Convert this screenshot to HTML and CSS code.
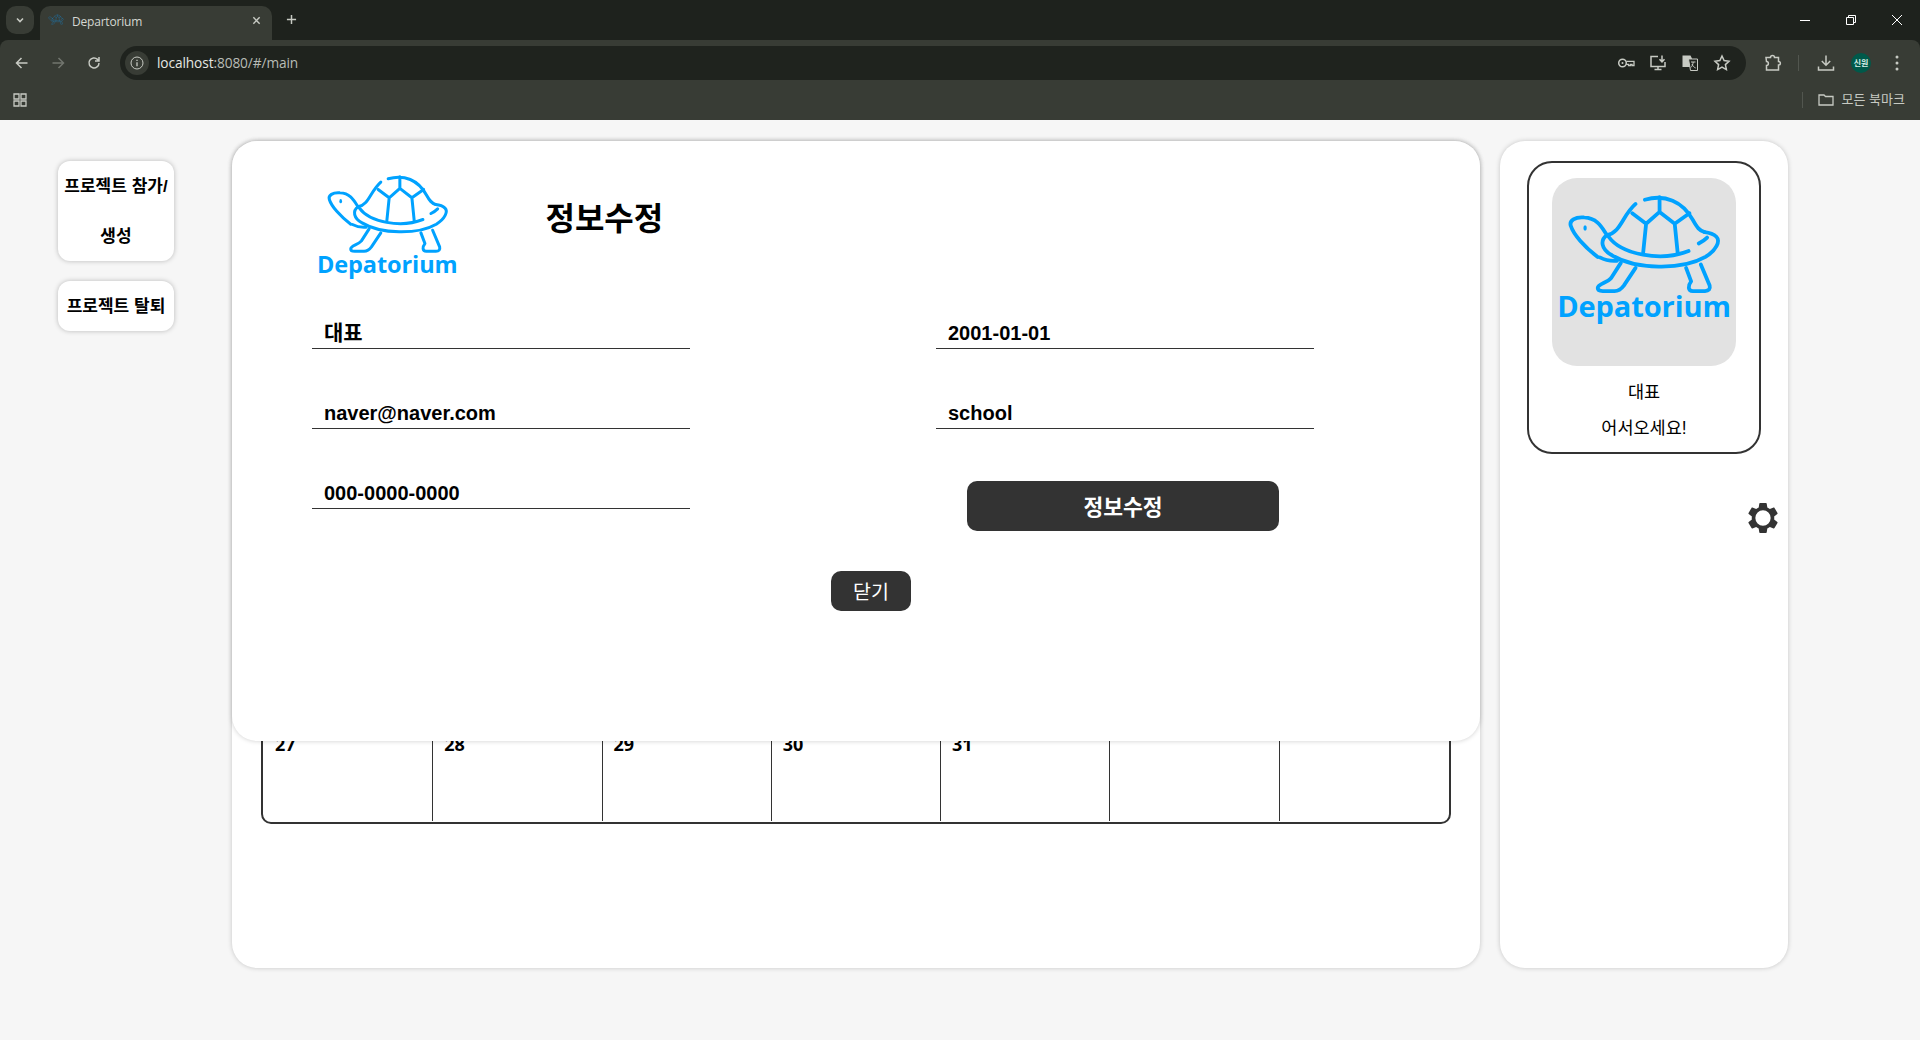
FILE: index.html
```html
<!DOCTYPE html>
<html lang="ko">
<head>
<meta charset="utf-8">
<title>Departorium</title>
<link rel="stylesheet" href="styles.css">
</head>
<body>
<svg class="defs" aria-hidden="true">
  <symbol id="turtle" viewBox="70 30 380 240">
    <g fill="none" stroke="currentColor" stroke-width="9" stroke-linecap="round" stroke-linejoin="round">
      <path d="M172 130C160 112 150 90 118 88C96 86 82 96 86 108C92 128 118 158 150 182"/>
      <path d="M172 130C205 124 208 84 240 56"/>
      <path d="M262 46C310 32 352 50 376 94C386 112 392 120 404 123"/>
      <path d="M172 130C155 142 158 164 184 178C240 212 350 214 406 182C432 166 442 144 432 134C424 126 414 124 404 123"/>
      <path d="M176 134C206 176 300 194 366 168"/>
      <path d="M390 150C398 146 404 142 410 136"/>
      <path d="M297 40V75L265 103L232 78M297 75L333 103L368 78M265 103L258 172M333 103L340 172"/>
      <path d="M155 183C168 190 182 192 196 191"/>
      <path d="M205 196L182 232C172 244 150 246 150 256C150 262 156 263 162 263H190C200 263 206 258 212 250L240 208"/>
      <path d="M360 208L372 240C364 250 364 263 376 263H405C414 263 418 258 416 250L395 200"/>
    </g>
    <ellipse cx="120" cy="113" rx="4" ry="6.500" fill="currentColor"/>
  </symbol>
</svg>

<header class="chrome">
  <div class="tabstrip">
    <div class="tab-menu">
      <svg class="ico10" viewBox="0 0 10 10"><path d="M2 3.500L5 6.500L8 3.500" class="s-light sw16"/></svg>
    </div>
    <div class="tab">
      <svg class="favicon"><use href="#turtle"/></svg>
      <span class="tab-title">Departorium</span>
      <svg class="tab-close" viewBox="0 0 10 10"><path d="M1.500 1.500L8.500 8.500M8.500 1.500L1.500 8.500" class="s-light sw16"/></svg>
    </div>
    <svg class="tab-new" viewBox="0 0 12 12"><path d="M6 1V11M1 6H11" class="s-light sw16"/></svg>
    <div class="win-controls">
      <svg class="win-btn" viewBox="0 0 10 10"><path d="M0 5.500H10" class="s-white"/></svg>
      <svg class="win-btn" viewBox="0 0 10 10"><path d="M.5 2.500H7.500V9.500H.5ZM2.500 2.500V.5H9.500V7.500H7.500" class="s-white"/></svg>
      <svg class="win-btn" viewBox="0 0 10 10"><path d="M0 0L10 10M10 0L0 10" class="s-white"/></svg>
    </div>
  </div>
  <div class="toolbar">
    <div class="navrow">
      <svg class="nav-ico" viewBox="0 0 16 16"><path d="M13.500 8H3M7.500 3L2.500 8L7.500 13" class="s-light sw15"/></svg>
      <svg class="nav-ico" viewBox="0 0 16 16"><path d="M2.500 8H13M8.500 3L13.500 8L8.500 13" class="s-dim sw15"/></svg>
      <svg class="nav-ico" viewBox="0 0 16 16"><path d="M13 8A5 5 0 1 1 11.500 4.400L13 6M13 2V6H9" class="s-light sw15"/></svg>
      <div class="omnibox">
        <div class="info-chip">
          <svg class="ico14" viewBox="0 0 14 14"><circle cx="7" cy="7" r="6" class="s-light"/><path d="M7 6.200V10.200M7 3.800V5" class="s-light sw13"/></svg>
        </div>
        <span class="url"><span class="url-host">localhost</span>:8080/#/main</span>
        <div class="omni-icons">
          <svg class="omni-ico" viewBox="0 0 18 18"><circle cx="5.500" cy="9" r="3.800" class="s-light sw15"/><circle cx="5.500" cy="9" r="1" class="f-light"/><path d="M9.300 7.400H17V11.500H15V10.400H13.500V11.500H11.500V10.400H9.300" class="s-light sw13"/></svg>
          <svg class="omni-ico" viewBox="0 0 18 18"><path d="M9 2.500H2V12.500H16V8M5.500 15.500H12.500M9 12.500V15.500" class="s-light sw15"/><path d="M13 1.500V7.500M10.500 5.200L13 7.800L15.500 5.200" class="s-light sw15"/></svg>
          <svg class="omni-ico" viewBox="0 0 18 18"><path d="M1.500 1.500H9.500L11 4.500V13H1.500Z" class="f-light"/><path d="M7.500 5H16.500V16.500H9.500Z" class="s-light f-dark"/><path d="M10 8H14.500M12.200 8C12 10.500 11 12.500 9.800 13.500M11 10C11.700 12 13 13.300 14.700 14" class="s-light"/></svg>
          <svg class="omni-ico" viewBox="0 0 18 18"><path d="M9 2L11.100 6.600L16 7.200L12.400 10.600L13.400 15.600L9 13.100L4.600 15.600L5.600 10.600L2 7.200L6.900 6.600Z" class="s-light sw15"/></svg>
        </div>
      </div>
      <svg class="ext-ico" viewBox="0 0 18 18"><path d="M2 3.500H6.500C6.500 .8 10.500 .8 10.500 3.500H14.500V7.500C17 7.500 17 11 14.500 11V16H2.500V11.500C5 11.500 5 7.500 2.500 7.500Z" class="s-light sw15"/></svg>
      <span class="sep"></span>
      <svg class="dl-ico" viewBox="0 0 18 18"><path d="M9 1.500V11M4.800 7L9 11.200L13.200 7M1.500 12.500V16H16.500V12.500" class="s-light sw15"/></svg>
      <span class="avatar">신원</span>
      <svg class="more-ico" viewBox="0 0 4 16"><circle cx="2" cy="2" r="1.500" class="f-light"/><circle cx="2" cy="8" r="1.500" class="f-light"/><circle cx="2" cy="14" r="1.500" class="f-light"/></svg>
    </div>
    <div class="bookmarks">
      <svg class="apps-ico" viewBox="0 0 14 14"><path d="M1 1H6V6H1ZM8 1H13V6H8ZM1 8H6V13H1ZM8 8H13V13H8Z" class="s-light sw13"/></svg>
      <span class="sep sep-bm"></span>
      <svg class="folder-ico" viewBox="0 0 16 12"><path d="M1 1H6L7.500 2.500H15V11H1Z" class="s-light sw13"/></svg>
      <span class="bm-label">모든 북마크</span>
    </div>
  </div>
</header>

<div class="page">
  <nav class="sidebar">
    <button class="side-btn side-btn-tall">프로젝트 참가/<br>생성</button>
    <button class="side-btn">프로젝트 탈퇴</button>
  </nav>

  <main class="main-card">
    <div class="calendar">
      <div class="day"></div><div class="day"></div><div class="day">1</div><div class="day">2</div><div class="day">3</div><div class="day">4</div><div class="day">5</div>
      <div class="day">6</div><div class="day">7</div><div class="day">8</div><div class="day">9</div><div class="day">10</div><div class="day">11</div><div class="day">12</div>
      <div class="day">13</div><div class="day">14</div><div class="day">15</div><div class="day">16</div><div class="day">17</div><div class="day">18</div><div class="day">19</div>
      <div class="day">20</div><div class="day">21</div><div class="day">22</div><div class="day">23</div><div class="day">24</div><div class="day">25</div><div class="day">26</div>
      <div class="day">27</div><div class="day">28</div><div class="day">29</div><div class="day">30</div><div class="day">31</div><div class="day"></div><div class="day"></div>
    </div>

    <section class="modal">
      <div class="modal-head">
        <div class="logo logo-sm">
          <svg class="logo-turtle"><use href="#turtle"/></svg>
          <span class="logo-text">Depatorium</span>
        </div>
        <h1 class="modal-title">정보수정</h1>
      </div>
      <div class="form">
        <div class="field field-ko">대표</div>
        <div class="field">2001-01-01</div>
        <div class="field">naver@naver.com</div>
        <div class="field">school</div>
        <div class="field">000-0000-0000</div>
        <button class="save-btn">정보수정</button>
      </div>
      <button class="close-btn">닫기</button>
    </section>
  </main>

  <aside class="right-card">
    <div class="profile">
      <div class="profile-img">
        <div class="logo logo-lg">
          <svg class="logo-turtle"><use href="#turtle"/></svg>
          <span class="logo-text">Depatorium</span>
        </div>
      </div>
      <p class="profile-line profile-name">대표</p>
      <p class="profile-line">어서오세요!</p>
    </div>
    <svg class="gear" viewBox="2.400 2.400 19.200 19.200"><path fill-rule="evenodd" d="M19.140 12.940c.04-.3.06-.61.06-.94 0-.32-.02-.64-.07-.94l2.030-1.580c.18-.14.23-.41.12-.61l-1.920-3.320c-.12-.22-.37-.29-.59-.22l-2.390.96c-.5-.38-1.030-.7-1.620-.94L14.400 2.810c-.04-.24-.24-.41-.48-.41h-3.840c-.24 0-.43.17-.47.41L9.250 5.350c-.59.24-1.130.57-1.620.94L5.240 5.330c-.22-.08-.47 0-.59.22L2.740 8.870c-.12.21-.08.47.12.61l2.030 1.580c-.05.3-.09.63-.09.94s.02.64.07.94l-2.030 1.580c-.18.14-.23.41-.12.61l1.920 3.320c.12.22.37.29.59.22l2.390-.96c.5.38 1.030.7 1.620.94l.36 2.540c.05.24.24.41.48.41h3.840c.24 0 .44-.17.47-.41l.36-2.540c.59-.24 1.130-.56 1.620-.94l2.390.96c.22.08.47 0 .59-.22l1.920-3.320c.12-.22.07-.47-.12-.61l-2.010-1.580zM12 7.100a4.900 4.900 0 1 0 0 9.800a4.900 4.900 0 1 0 0-9.800z"/></svg>
  </aside>
</div>
</body>
</html>
```

FILE: styles.css
```css
* { box-sizing: border-box; }

html, body {
  margin: 0;
  height: 1040px;
  overflow: hidden;
}

body {
  background: #f6f6f6;
  color: #000;
  font-family: "Liberation Sans", "Noto Sans CJK KR", sans-serif;
}

.defs { display: none; }

/* shared icon strokes */
.s-light, .s-white, .s-dim { fill: none; stroke-width: 1; }
.s-light { stroke: #c7cac3; }
.s-white { stroke: #fff; }
.s-dim { stroke: #71756e; }
.sw13 { stroke-width: 1.3; }
.sw15 { stroke-width: 1.5; }
.sw16 { stroke-width: 1.6; }
.f-light { fill: #c7cac3; }
.f-dark { fill: #1f231e; }

/* browser chrome */
.chrome {
  height: 120px;
  background: #1e221d;
  font-family: "Noto Sans", "Noto Sans CJK KR", sans-serif;
}

.tabstrip {
  height: 40px;
  display: flex;
  align-items: flex-start;
  padding: 6px 0 0 6px;
}

.tab-menu {
  width: 28px;
  height: 28px;
  border-radius: 10px;
  background: #383c35;
  display: flex;
  align-items: center;
  justify-content: center;
}

.ico10 { width: 10px; height: 10px; }

.tab {
  width: 232px;
  height: 34px;
  margin-left: 6px;
  padding: 8px 11px 0 8px;
  border-radius: 10px 10px 0 0;
  background: #383c35;
  display: flex;
  align-items: flex-start;
}

.favicon { width: 16px; height: 11px; color: #1e7ab5; }

.tab-title {
  margin-left: 8px;
  font-size: 12px;
  line-height: 16px;
  color: #d5d8d2;
  font-family: "Open Sans", sans-serif;
  letter-spacing: -0.2px;
}

.tab-close { width: 9px; height: 9px; margin: 2px 0 0 auto; }

.tab-new { width: 11px; height: 11px; margin: 8px 0 0 14px; }

.win-controls {
  margin-left: auto;
  display: flex;
  gap: 36px;
  padding: 9px 18px 0 0;
}

.win-btn { width: 10px; height: 10px; }

.toolbar {
  height: 80px;
  background: #383c35;
  border-radius: 8px 8px 0 0;
}

.navrow {
  height: 46px;
  display: flex;
  align-items: flex-start;
  padding-top: 6px;
}

.nav-ico { width: 16px; height: 16px; margin: 9px 0 0 14px; }
.nav-ico + .nav-ico { margin-left: 20px; }

.omnibox {
  width: 1626px;
  height: 34px;
  margin-left: 18px;
  border-radius: 17px;
  background: #1f231e;
  display: flex;
  align-items: center;
  padding: 0 15px 0 5px;
}

.info-chip {
  width: 24px;
  height: 24px;
  border-radius: 50%;
  background: #383c35;
  display: flex;
  align-items: center;
  justify-content: center;
}

.ico14 { width: 14px; height: 14px; }

.url {
  margin: 0 0 2px 8px;
  font-size: 13.700px;
  color: #b9bcb6;
  font-family: "Open Sans", sans-serif;
  letter-spacing: -0.1px;
}

.url-host { color: #e6e8e3; }

.omni-icons {
  margin-left: auto;
  display: flex;
  gap: 14px;
}

.omni-ico { width: 18px; height: 18px; }

.ext-ico { width: 18px; height: 18px; margin: 8px 0 0 18px; }

.sep {
  width: 1px;
  height: 16px;
  margin: 9px 0 0 16px;
  background: #52564f;
}

.dl-ico { width: 18px; height: 18px; margin: 8px 0 0 18px; }

.avatar {
  width: 20px;
  height: 20px;
  margin: 7px 0 0 16px;
  border-radius: 50%;
  background: #00594a;
  color: #d8efe8;
  font-size: 8px;
  font-weight: 700;
  line-height: 20px;
  text-align: center;
  white-space: nowrap;
  font-family: "Noto Sans CJK KR", sans-serif;
}

.more-ico { width: 4px; height: 16px; margin: 9px 0 0 24px; }

.bookmarks {
  height: 34px;
  padding: 0 0 7px 13px;
  display: flex;
  align-items: center;
}

.apps-ico { width: 14px; height: 14px; }

.sep-bm { margin: 0 0 0 auto; }

.folder-ico { width: 16px; height: 12px; margin-left: 15px; }

.bm-label {
  margin: 0 15px 2px 8px;
  font-size: 13px;
  color: #c7cac3;
  font-family: "Noto Sans CJK KR", sans-serif;
}

/* page */
.page {
  height: 920px;
  padding: 21px 0 0 58px;
  display: flex;
  align-items: flex-start;
}

.sidebar {
  width: 116px;
  margin-top: 20px;
  display: flex;
  flex-direction: column;
  gap: 20px;
}

.side-btn {
  height: 50px;
  padding: 1px 0 0;
  border: none;
  border-radius: 12px;
  background: #fff;
  box-shadow: 0 0 5px rgba(0, 0, 0, 0.25);
  font-family: "Liberation Sans", "Noto Sans CJK KR", sans-serif;
  font-size: 17px;
  font-weight: 700;
  line-height: 50px;
  white-space: nowrap;
  color: #000;
}

.side-btn-tall { height: 100px; }

.main-card {
  position: relative;
  width: 1248px;
  height: 827px;
  margin-left: 58px;
  padding: 0 29px 144px;
  display: flex;
  flex-direction: column;
  justify-content: flex-end;
  background: #fff;
  border-radius: 25px;
  box-shadow: 0 0 5px rgba(0, 0, 0, 0.2);
}

.calendar {
  display: grid;
  grid-template-columns: repeat(6, 169.250px) 1fr;
  grid-auto-rows: 90px;
  padding-bottom: 1px;
  border: 2px solid #333;
  border-radius: 10px;
}

.day {
  padding: 1px 0 0 11px;
  border-left: 1px solid #333;
  font-family: "Noto Sans", sans-serif;
  font-size: 18px;
  font-weight: 700;
}

.day:nth-child(7n+1) {
  padding-left: 12px;
  border-left: none;
}

/* modal laid over the calendar */
.modal {
  position: absolute;
  left: 0;
  top: 0;
  width: 1248px;
  height: 600px;
  background: #fff;
  border-radius: 25px;
  box-shadow: 0 0 5px rgba(0, 0, 0, 0.2);
}

.modal-head {
  height: 128px;
  display: flex;
  align-items: flex-start;
  padding-left: 85px;
}

.logo {
  display: flex;
  flex-direction: column;
  align-items: center;
  color: #00a2ff;
}

.logo-sm { margin-top: 32px; }

.logo-sm .logo-turtle { width: 127px; height: 81px; }

.logo-sm .logo-text {
  margin-top: -3px;
  font-size: 23.500px;
  line-height: 26px;
}

.logo-text {
  font-family: "Open Sans", sans-serif;
  font-weight: 700;
  letter-spacing: -0.1px;
  white-space: nowrap;
}

.modal-title {
  margin: 55px 0 0 88px;
  font-size: 32px;
  font-weight: 700;
  line-height: 40px;
  font-family: "Noto Sans CJK KR", sans-serif;
}

.form {
  width: 1002px;
  margin-left: 80px;
  display: grid;
  grid-template-columns: 378px 378px;
  grid-template-rows: repeat(3, 80px);
  column-gap: 246px;
}

.field {
  align-self: end;
  height: 40px;
  padding: 8px 0 0 12px;
  border-bottom: 1px solid #333;
  font-size: 20px;
  font-weight: 700;
  line-height: 32px;
}

.field-ko { font-size: 21px; }

.save-btn {
  align-self: start;
  width: 312px;
  height: 50px;
  margin: 52px 0 0 31px;
  padding: 0 0 2px;
  border: none;
  border-radius: 10px;
  background: #333;
  color: #fff;
  font-family: "Liberation Sans", "Noto Sans CJK KR", sans-serif;
  font-size: 21.500px;
  font-weight: 700;
}

.close-btn {
  display: block;
  width: 80px;
  height: 40px;
  margin: 62px 0 0 599px;
  padding: 0 0 2px;
  border: none;
  border-radius: 10px;
  background: #333;
  color: #fff;
  font-family: "Liberation Sans", "Noto Sans CJK KR", sans-serif;
  font-size: 19.500px;
}

/* right column */
.right-card {
  width: 288px;
  height: 827px;
  margin-left: 20px;
  padding: 20px 10px 0 27px;
  display: flex;
  flex-direction: column;
  background: #fff;
  border-radius: 25px;
  box-shadow: 0 0 5px rgba(0, 0, 0, 0.2);
}

.profile {
  width: 234px;
  height: 293px;
  padding-top: 15px;
  border: 2px solid #333;
  border-radius: 25px;
  display: flex;
  flex-direction: column;
  align-items: center;
}

.profile-img {
  width: 184px;
  height: 188px;
  padding-top: 15px;
  border-radius: 25px;
  background: #e2e2e2;
}

.logo-lg .logo-turtle { width: 160px; height: 101px; }

.logo-lg .logo-text {
  margin-top: -4px;
  font-size: 29px;
  line-height: 32px;
}

.profile-line {
  margin: 0;
  font-size: 17.500px;
  line-height: 36px;
}

.profile-name { margin-top: 8px; }

.gear {
  width: 30px;
  height: 30px;
  margin-top: 49px;
  align-self: flex-end;
  fill: #333;
}
```
